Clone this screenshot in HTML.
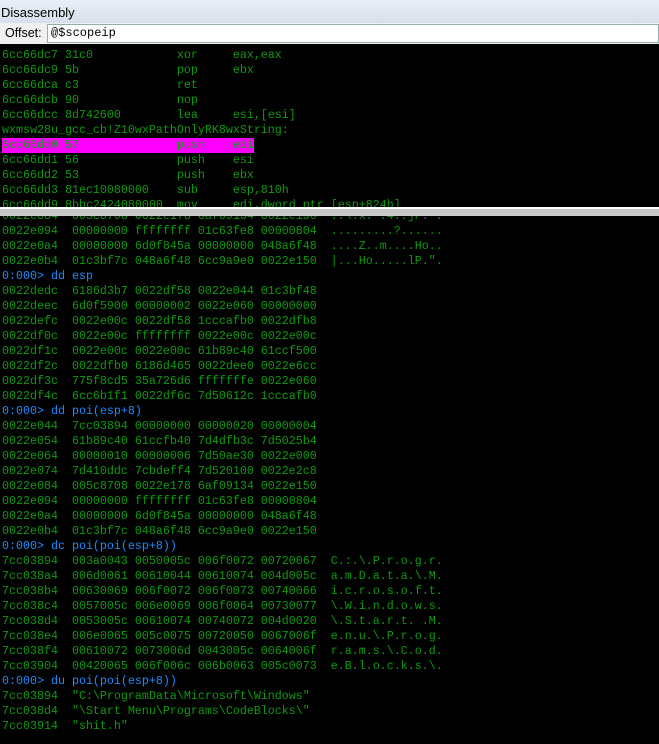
<!DOCTYPE html>
<html><head><style>
body{margin:0;width:659px;height:744px;background:#000;overflow:hidden;position:relative;font-family:"Liberation Sans",sans-serif}
#title{position:absolute;left:0;top:0;width:659px;height:23px;background:linear-gradient(#e9eef5,#d6e0ec);font-size:13px;line-height:26px;color:#000;padding-left:1px;box-sizing:border-box}
#off{position:absolute;left:0;top:23px;width:659px;height:21px;background:#f0f0f0;font-size:12.5px}
#off span{position:absolute;left:5px;top:3px}
#inp{position:absolute;left:47px;top:1px;width:612px;height:19px;background:#fff;border:1px solid #9aa;box-sizing:border-box;font-family:"Liberation Mono",monospace;font-size:12px;line-height:17px;padding-left:3px}
pre{margin:0;position:absolute;left:2px;font-family:"Liberation Mono",monospace;font-size:11.67px;line-height:15px;color:#0f9a0f;white-space:pre}
#upw{position:absolute;left:0;top:45px;width:659px;height:162px;overflow:hidden}
#up{top:3px}
#div{position:absolute;left:0;top:207px;width:659px;height:9px;background:#c8c8c8;border-top:2px solid #fff;box-sizing:border-box}
#low{position:absolute;left:0;top:216px;width:659px;height:528px;overflow:hidden}
#lo{top:-7px}
.b{color:#1e8cff}
.m{background:#ff00ff;display:inline-block;width:252px}
</style></head><body>
<div id="title">Disassembly</div>
<div id="off"><span>Offset:</span><div id="inp">@$scopeip</div></div>
<div id="upw"><pre id="up">6cc66dc7 31c0            xor     eax,eax
6cc66dc9 5b              pop     ebx
6cc66dca c3              ret
6cc66dcb 90              nop
6cc66dcc 8d742600        lea     esi,[esi]
wxmsw28u_gcc_cb!Z10wxPathOnlyRK8wxString:
<span class="m">6cc66dd0 57              push    edi</span>
6cc66dd1 56              push    esi
6cc66dd2 53              push    ebx
6cc66dd3 81ec10080000    sub     esp,810h
6cc66dd9 8bbc2424080000  mov     edi,dword ptr [esp+824h]</pre></div>
<div id="div"></div>
<div id="low"><pre id="lo">0022e084  005c8708 0022e178 6af09134 0022e150  ..\.x.".4..jP.".
0022e094  00000000 ffffffff 01c63fe8 00000804  .........?......
0022e0a4  00000000 6d0f845a 00000000 048a6f48  ....Z..m....Ho..
0022e0b4  01c3bf7c 048a6f48 6cc9a9e0 0022e150  |...Ho.....lP.".
<span class="b">0:000&gt; dd esp</span>
0022dedc  6186d3b7 0022df58 0022e044 01c3bf48
0022deec  6d0f5900 00000002 0022e060 00000000
0022defc  0022e00c 0022df58 1cccafb0 0022dfb8
0022df0c  0022e00c ffffffff 0022e00c 0022e00c
0022df1c  0022e00c 0022e00c 61b89c40 61ccf500
0022df2c  0022dfb0 6186d465 0022dee0 0022e6cc
0022df3c  775f8cd5 35a726d6 fffffffe 0022e060
0022df4c  6cc6b1f1 0022df6c 7d50612c 1cccafb0
<span class="b">0:000&gt; dd poi(esp+8)</span>
0022e044  7cc03894 00000000 00000020 00000004
0022e054  61b89c40 61ccfb40 7d4dfb3c 7d5025b4
0022e064  00000010 00000006 7d50ae30 0022e000
0022e074  7d410ddc 7cbdeff4 7d520100 0022e2c8
0022e084  005c8708 0022e178 6af09134 0022e150
0022e094  00000000 ffffffff 01c63fe8 00000804
0022e0a4  00000000 6d0f845a 00000000 048a6f48
0022e0b4  01c3bf7c 048a6f48 6cc9a9e0 0022e150
<span class="b">0:000&gt; dc poi(poi(esp+8))</span>
7cc03894  003a0043 0050005c 006f0072 00720067  C.:.\.P.r.o.g.r.
7cc038a4  006d0061 00610044 00610074 004d005c  a.m.D.a.t.a.\.M.
7cc038b4  00630069 006f0072 006f0073 00740066  i.c.r.o.s.o.f.t.
7cc038c4  0057005c 006e0069 006f0064 00730077  \.W.i.n.d.o.w.s.
7cc038d4  0053005c 00610074 00740072 004d0020  \.S.t.a.r.t. .M.
7cc038e4  006e0065 005c0075 00720050 0067006f  e.n.u.\.P.r.o.g.
7cc038f4  00610072 0073006d 0043005c 0064006f  r.a.m.s.\.C.o.d.
7cc03904  00420065 006f006c 006b0063 005c0073  e.B.l.o.c.k.s.\.
<span class="b">0:000&gt; du poi(poi(esp+8))</span>
7cc03894  "C:\ProgramData\Microsoft\Windows"
7cc038d4  "\Start Menu\Programs\CodeBlocks\"
7cc03914  "shit.h"</pre></div>
</body></html>
